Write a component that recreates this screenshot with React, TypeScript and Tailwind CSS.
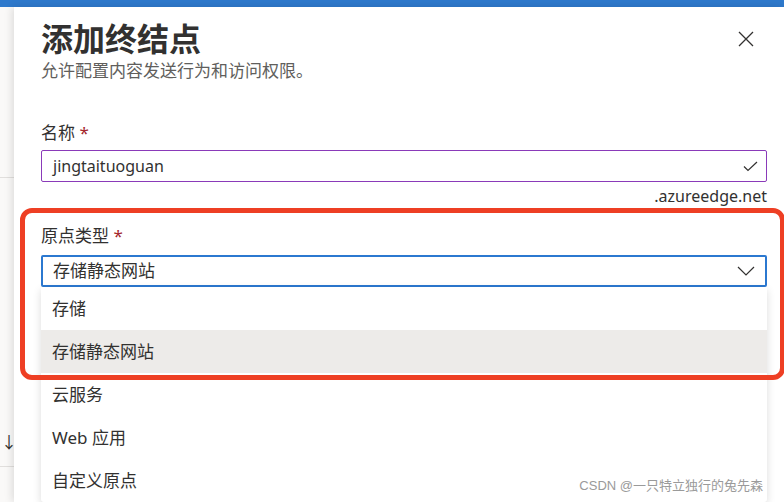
const options = ["存储", "存储静态网站", "云服务", "Web 应用", "自定义原点"];

export default function App() {
  return (
    <div className="relative w-[784px] h-[502px] overflow-hidden bg-white font-['Noto_Sans','Noto_Sans_CJK_SC',sans-serif] text-[#323130]">
      {/* top bar */}
      <div className="h-[7px] bg-[#2e79cc]" />

      <div className="flex h-[495px]">
        {/* page behind the panel */}
        <aside className="w-[14px] shrink-0 bg-[#faf9f8]">
          <div className="h-[171px] border-b border-[#e1dfdd]" />
          <div className="h-[289px] border-b border-[#e1dfdd] flex items-end justify-end overflow-hidden pb-[14px]">
            <span className="mr-[-3px] text-[16px] leading-[20px] text-[#323130] whitespace-nowrap">↑↓</span>
          </div>
        </aside>

        {/* panel */}
        <main className="relative z-[1] flex-1 bg-white pl-[27px] pr-[17px] pt-[12px] shadow-[-2px_0_8px_rgba(0,0,0,0.12)]">
          <div className="flex items-start justify-between">
            <h1 className="text-[32px] leading-[40px] font-bold text-[#323130]">添加终结点</h1>
            <button className="mt-[12px] mr-[13px] text-[#323130]">
              <svg width="16" height="16" viewBox="0 0 16 16" fill="none" stroke="currentColor" strokeWidth="1.3">
                <path d="M1 1L15 15M15 1L1 15" />
              </svg>
            </button>
          </div>
          <p className="text-[17px] leading-[24px] text-[#605e5c]">允许配置内容发送行为和访问权限。</p>

          <label className="block mt-[38px] text-[17px] leading-[24px]">
            名称 <span className="text-[#a4262c]">*</span>
          </label>
          <div className="mt-[5px] h-[32px] border border-[#8a3ab9] rounded-[2px] pl-[11px] pr-[8px] flex items-center justify-between">
            <span className="text-[16px]">jingtaituoguan</span>
            <svg width="15" height="11" viewBox="0 0 15 11" fill="none" stroke="#323130" strokeWidth="1.2">
              <path d="M1 5.5L5 9.5L14 1" />
            </svg>
          </div>
          <div className="mt-[2px] text-right text-[16px] leading-[24px]">.azureedge.net</div>

          <label className="block mt-[16px] text-[17px] leading-[24px]">
            原点类型 <span className="text-[#a4262c]">*</span>
          </label>
          <div className="relative mt-[7px]">
            <div className="h-[32px] border-2 border-[#2b78d0] rounded-[2px] pl-[10px] pr-[10px] flex items-center justify-between">
              <span className="text-[17px]">存储静态网站</span>
              <svg width="18" height="10" viewBox="0 0 18 10" fill="none" stroke="#323130" strokeWidth="1.2">
                <path d="M1 1L9 9L17 1" />
              </svg>
            </div>
            <ul className="absolute left-0 right-0 top-full z-10 bg-white rounded-b-[3px] shadow-[0_3px_8px_rgba(0,0,0,0.14)]">
              {options.map((o) => (
                <li
                  key={o}
                  className={`h-[43px] pl-[11px] flex items-center text-[17px] ${o === "存储静态网站" ? "bg-[#edebe9]" : ""}`}
                >
                  {o}
                </li>
              ))}
            </ul>
          </div>
        </main>
      </div>

      {/* annotation box */}
      <div className="pointer-events-none absolute left-[20px] top-[208px] z-20 w-[765px] h-[172px] border-[5px] border-[#ee3f24] rounded-[12px]" />

      {/* watermark */}
      <div className="absolute right-[21px] bottom-[8px] z-30 text-[13px] leading-[16px] text-[#9a9a9a] font-['Liberation_Sans','Noto_Sans_CJK_SC',sans-serif]">
        CSDN @一只特立独行的兔先森
      </div>
    </div>
  );
}
